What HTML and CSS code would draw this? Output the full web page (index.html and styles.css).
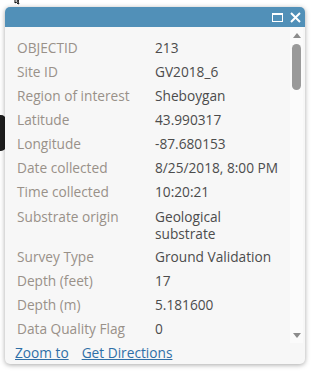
FILE: index.html
```html
<!DOCTYPE html>
<html>
<head>
<meta charset="utf-8">
<link rel="stylesheet" href="styles.css">
</head>
<body>
<div class="map-bit"></div>
<svg class="cursor" width="6" height="6" viewBox="0 0 6 6"><path d="M1 0 L1 4 L2.5 3 L4 5 L5 4.5 L3.5 2.5 L5 2 Z" fill="#fff" stroke="#000" stroke-width="1"/></svg>
<div class="popup">
  <div class="header">
    <span class="btn-max"></span>
    <svg class="btn-close" width="11" height="11" viewBox="0 0 11 11"><path d="M1 1 L10 10 M10 1 L1 10" stroke="#fff" stroke-width="2"/></svg>
  </div>
  <div class="body">
    <div class="scroll">
      <div class="content">
        <div class="row"><div class="name">OBJECTID</div><div class="val">213</div></div>
        <div class="row"><div class="name">Site ID</div><div class="val">GV2018_6</div></div>
        <div class="row"><div class="name">Region of interest</div><div class="val">Sheboygan</div></div>
        <div class="row"><div class="name">Latitude</div><div class="val">43.990317</div></div>
        <div class="row"><div class="name">Longitude</div><div class="val">-87.680153</div></div>
        <div class="row"><div class="name">Date collected</div><div class="val">8/25/2018, 8:00 PM</div></div>
        <div class="row"><div class="name">Time collected</div><div class="val">10:20:21</div></div>
        <div class="row row-multi"><div class="name">Substrate origin</div><div class="val">Geological<br>substrate</div></div>
        <div class="row"><div class="name">Survey Type</div><div class="val">Ground Validation</div></div>
        <div class="row"><div class="name">Depth (feet)</div><div class="val">17</div></div>
        <div class="row"><div class="name">Depth (m)</div><div class="val">5.181600</div></div>
        <div class="row"><div class="name">Data Quality Flag</div><div class="val">0</div></div>
      </div>
      <div class="scrollbar">
        <span class="arrow-up"></span>
        <span class="thumb"></span>
        <span class="spacer"></span>
        <span class="arrow-down"></span>
      </div>
    </div>
    <div class="actions">
      <a class="link">Zoom to</a>
      <a class="link">Get Directions</a>
    </div>
  </div>
</div>
</body>
</html>
```
FILE: styles.css
```css
html, body {
  margin: 0;
  padding: 0;
  background: #ffffff;
  width: 314px;
  height: 373px;
  overflow: hidden;
  font-family: "Open Sans", Lato, sans-serif;
}
.map-bit {
  position: absolute;
  left: -6px;
  top: 115px;
  width: 12px;
  height: 36px;
  background: #1e1e1e;
  border-radius: 5px;
}
.cursor {
  position: absolute;
  left: 14px;
  top: -1px;
}
.popup {
  position: relative;
  margin: 7px 0 0 5px;
  width: 300px;
  height: 357px;
  border-radius: 5px;
  overflow: hidden;
  box-shadow: 0 1px 5px rgba(0, 0, 0, 0.35);
  display: flex;
  flex-direction: column;
  background: #f7f7f7;
}
.header {
  height: 20px;
  background: #5190b8;
  display: flex;
  align-items: center;
  justify-content: flex-end;
  gap: 7px;
  padding-right: 4px;
}
.btn-max {
  width: 9px;
  height: 6px;
  border: 1px solid #fff;
  border-top-width: 2px;
}
.btn-close {
  display: block;
}
.body {
  flex: 1;
  display: flex;
  flex-direction: column;
}
.scroll {
  height: 316px;
  display: flex;
}
.content {
  flex: 1;
  padding: 9px 0 0 12px;
}
.row {
  display: flex;
  padding: 4px 0;
  font-size: 13.7px;
  line-height: 16px;
}
.row-multi {
  padding-bottom: 3px;
}
.row-multi .val {
  line-height: 17px;
}
.row-multi .name {
  line-height: 17px;
}
.name {
  width: 138px;
  color: #999189;
}
.val {
  color: #4c4c4c;
}
.scrollbar {
  width: 13px;
  margin-right: 2px;
  background: #fbfbfb;
  display: flex;
  flex-direction: column;
  align-items: center;
}
.arrow-up {
  margin-top: 6px;
  width: 0;
  height: 0;
  border-left: 4.5px solid transparent;
  border-right: 4.5px solid transparent;
  border-bottom: 5px solid #8c8c8c;
}
.thumb {
  margin-top: 6px;
  width: 9px;
  height: 46px;
  border-radius: 5px;
  background: #9a9a9a;
}
.spacer {
  flex: 1;
}
.arrow-down {
  margin-bottom: 5px;
  width: 0;
  height: 0;
  border-left: 4.5px solid transparent;
  border-right: 4.5px solid transparent;
  border-top: 5px solid #8c8c8c;
}
.actions {
  display: flex;
  gap: 13px;
  padding: 2px 0 0 10px;
  font-size: 13.7px;
  line-height: 16px;
}
.link {
  color: #2f6fa7;
  text-decoration: underline;
}
```
